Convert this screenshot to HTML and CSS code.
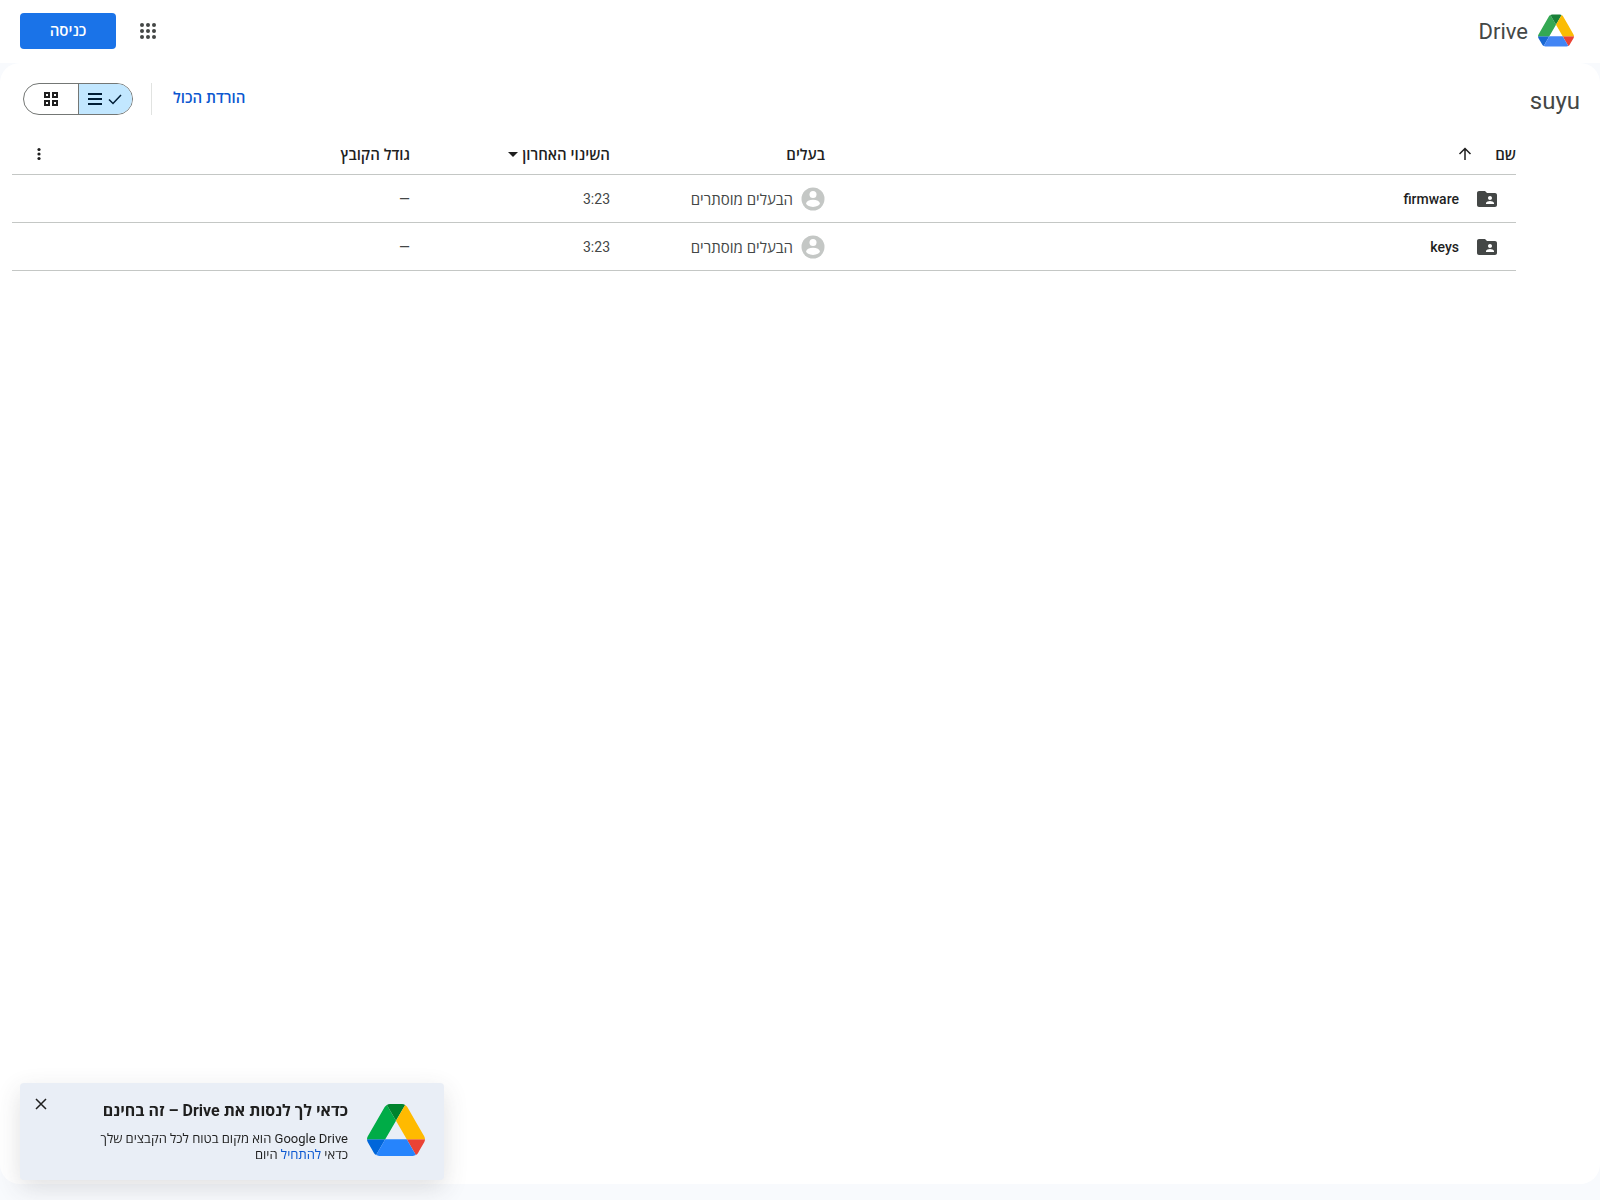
FILE: index.html
```html
<!DOCTYPE html>
<html lang="he" dir="rtl">
<head>
<meta charset="utf-8">
<title>suyu – Drive</title>
<meta name="viewport" content="width=device-width, initial-scale=1">
<link rel="stylesheet" href="styles.css">
</head>
<body>
<header class="topbar">
  <a class="brand" href="#">
    <svg class="brand-logo" viewBox="0 0 87.3 78" aria-hidden="true">
      <path fill="#1967d2" d="M6.6 66.85l3.85 6.65c.8 1.4 1.95 2.5 3.3 3.3l13.75-23.8H0c0 1.55.4 3.1 1.2 4.5z"/>
      <path fill="#34a853" d="M43.65 25L29.9 1.2c-1.35.8-2.5 1.9-3.3 3.3l-25.4 44A9.06 9.06 0 000 53h27.5z"/>
      <path fill="#ea4335" d="M73.55 76.8c1.35-.8 2.5-1.9 3.3-3.3l1.6-2.75L86.1 57.5c.8-1.4 1.2-2.95 1.2-4.5H59.8z"/>
      <path fill="#188038" d="M43.65 25L57.4 1.2C56.05.4 54.5 0 52.9 0H34.4c-1.6 0-3.15.45-4.5 1.2z"/>
      <path fill="#4285f4" d="M59.8 53H27.5L13.75 76.8c1.35.8 2.9 1.2 4.5 1.2h50.8c1.6 0 3.15-.45 4.5-1.2z"/>
      <path fill="#fbbc04" d="M73.4 26.5l-12.7-22c-.8-1.4-1.95-2.5-3.3-3.3L43.65 25 59.8 53h27.45c0-1.55-.4-3.1-1.2-4.5z"/>
    </svg>
    <span class="brand-name">Drive</span>
  </a>
  <div class="account">
    <button class="icon-button" type="button" aria-label="Google apps">
      <svg width="24" height="24" viewBox="0 0 24 24" fill="#444746"><circle cx="6" cy="6" r="2"/><circle cx="12" cy="6" r="2"/><circle cx="18" cy="6" r="2"/><circle cx="6" cy="12" r="2"/><circle cx="12" cy="12" r="2"/><circle cx="18" cy="12" r="2"/><circle cx="6" cy="18" r="2"/><circle cx="12" cy="18" r="2"/><circle cx="18" cy="18" r="2"/></svg>
    </button>
    <button class="sign-in" type="button">כניסה</button>
  </div>
</header>

<main class="panel">
  <div class="toolbar">
    <h1 class="folder-title">suyu</h1>
    <div class="actions">
      <button class="download" type="button">הורדת הכול</button>
      <div class="view-toggle">
        <button class="view selected" type="button" aria-label="List">
          <svg width="16" height="16" viewBox="0 0 16 16" fill="none" stroke="#001d35" stroke-width="1.5"><path d="M2 8.5l4 4 8-8.5"/></svg>
          <svg width="16" height="16" viewBox="0 0 16 16" fill="#001d35"><path d="M1 2h14v2H1zM1 7h14v2H1zM1 12h14v2H1z"/></svg>
        </button>
        <button class="view" type="button" aria-label="Grid">
          <svg width="16" height="16" viewBox="0 0 16 16" fill="none" stroke="#1f1f1f" stroke-width="2"><path d="M2 2h4v4H2zM10 2h4v4h-4zM2 10h4v4H2zM10 10h4v4h-4z"/></svg>
        </button>
      </div>
    </div>
  </div>

  <table class="files">
    <colgroup><col><col class="col-owner"><col class="col-date"><col class="col-size"></colgroup>
    <thead>
      <tr>
        <th><div class="head name-head"><span>שם</span>
          <svg width="20" height="20" viewBox="0 0 20 20" fill="none" stroke="#1f1f1f" stroke-width="1.5"><path d="M10 16V5M4.5 10L10 4.5l5.5 5.5"/></svg></div></th>
        <th>בעלים</th>
        <th><div class="head date-head"><span>השינוי האחרון</span>
          <svg width="10" height="5" viewBox="0 0 10 5" fill="#1f1f1f"><path d="M0 0h10L5 5z"/></svg></div></th>
        <th><div class="head size-head"><span>גודל הקובץ</span>
          <button class="icon-button more" type="button" aria-label="More"><svg width="20" height="20" viewBox="0 0 20 20" fill="#1f1f1f"><circle cx="10" cy="5.5" r="1.6"/><circle cx="10" cy="10" r="1.6"/><circle cx="10" cy="14.5" r="1.6"/></svg></button></div></th>
      </tr>
    </thead>
    <tbody>
      <tr>
        <td><div class="name"><svg width="24" height="24" viewBox="0 0 24 24" fill="#444746"><path fill-rule="evenodd" d="M20 6h-8l-2-2H4c-1.1 0-1.99.9-1.99 2L2 18c0 1.1.9 2 2 2h16c1.1 0 2-.9 2-2V8c0-1.1-.9-2-2-2zm-5 3c1.1 0 2 .9 2 2s-.9 2-2 2-2-.9-2-2 .9-2 2-2zm4 8h-8v-1c0-1.33 2.67-2 4-2s4 .67 4 2v1z"/></svg><span>firmware</span></div></td>
        <td><div class="owner"><svg width="24" height="24" viewBox="0 0 24 24" fill="#c4c7c5"><circle cx="12" cy="12" r="11.5"/><circle cx="12" cy="7.5" r="3.5" fill="#fff"/><ellipse cx="12" cy="16.3" rx="6.8" ry="3.6" fill="#fff"/></svg><span>הבעלים מוסתרים</span></div></td>
        <td>3:23</td>
        <td>—</td>
      </tr>
      <tr>
        <td><div class="name"><svg width="24" height="24" viewBox="0 0 24 24" fill="#444746"><path fill-rule="evenodd" d="M20 6h-8l-2-2H4c-1.1 0-1.99.9-1.99 2L2 18c0 1.1.9 2 2 2h16c1.1 0 2-.9 2-2V8c0-1.1-.9-2-2-2zm-5 3c1.1 0 2 .9 2 2s-.9 2-2 2-2-.9-2-2 .9-2 2-2zm4 8h-8v-1c0-1.33 2.67-2 4-2s4 .67 4 2v1z"/></svg><span>keys</span></div></td>
        <td><div class="owner"><svg width="24" height="24" viewBox="0 0 24 24" fill="#c4c7c5"><circle cx="12" cy="12" r="11.5"/><circle cx="12" cy="7.5" r="3.5" fill="#fff"/><ellipse cx="12" cy="16.3" rx="6.8" ry="3.6" fill="#fff"/></svg><span>הבעלים מוסתרים</span></div></td>
        <td>3:23</td>
        <td>—</td>
      </tr>
    </tbody>
  </table>
</main>

<aside class="promo">
  <svg class="promo-logo" viewBox="0 0 87.3 78" aria-hidden="true">
    <path fill="#0066da" d="M6.6 66.85l3.85 6.65c.8 1.4 1.95 2.5 3.3 3.3l13.75-23.8H0c0 1.55.4 3.1 1.2 4.5z"/>
    <path fill="#00ac47" d="M43.65 25L29.9 1.2c-1.35.8-2.5 1.9-3.3 3.3l-25.4 44A9.06 9.06 0 000 53h27.5z"/>
    <path fill="#ea4335" d="M73.55 76.8c1.35-.8 2.5-1.9 3.3-3.3l1.6-2.75L86.1 57.5c.8-1.4 1.2-2.95 1.2-4.5H59.8z"/>
    <path fill="#00832d" d="M43.65 25L57.4 1.2C56.05.4 54.5 0 52.9 0H34.4c-1.6 0-3.15.45-4.5 1.2z"/>
    <path fill="#2684fc" d="M59.8 53H27.5L13.75 76.8c1.35.8 2.9 1.2 4.5 1.2h50.8c1.6 0 3.15-.45 4.5-1.2z"/>
    <path fill="#ffba00" d="M73.4 26.5l-12.7-22c-.8-1.4-1.95-2.5-3.3-3.3L43.65 25 59.8 53h27.45c0-1.55-.4-3.1-1.2-4.5z"/>
  </svg>
  <div class="promo-text">
    <h2>כדאי לך לנסות את Drive – זה בחינם</h2>
    <p>Google Drive הוא מקום בטוח לכל הקבצים שלך<br>כדאי <a href="#">להתחיל</a> היום</p>
  </div>
  <button class="icon-button promo-close" type="button" aria-label="Close">
    <svg width="16" height="16" viewBox="0 0 16 16" fill="none" stroke="#1f1f1f" stroke-width="1.5"><path d="M3 3l10 10M13 3L3 13"/></svg>
  </button>
</aside>
</body>
</html>
```
FILE: styles.css
```css
* {
  box-sizing: border-box;
}

body {
  margin: 0;
  min-height: 100vh;
  display: flex;
  flex-direction: column;
  background: #f8fafd;
  color: #1f1f1f;
  font: 400 14px/20px Roboto, "Open Sans", sans-serif;
}

button {
  margin: 0;
  padding: 0;
  border: 0;
  background: none;
  color: inherit;
  font: inherit;
  cursor: pointer;
}

svg {
  display: block;
  flex: none;
}

.icon-button {
  display: flex;
  align-items: center;
  justify-content: center;
}

.topbar {
  height: 63px;
  padding: 0 26px 2px 20px;
  display: flex;
  align-items: center;
  justify-content: space-between;
  background: #fff;
}

.brand {
  display: flex;
  align-items: center;
  gap: 10px;
  color: #444746;
  font-size: 22px;
  line-height: 32px;
  text-decoration: none;
}

.brand-logo {
  width: 36px;
  height: 33px;
}

.brand-name {
  padding-top: 2px;
}

.account {
  display: flex;
  align-items: center;
  gap: 12px;
}

.account .icon-button {
  width: 40px;
  height: 40px;
}

.sign-in {
  width: 96px;
  height: 36px;
  padding-bottom: 2px;
  border-radius: 4px;
  background: #1a73e8;
  color: #fff;
  font: 600 15px/20px "Open Sans", sans-serif;
}

.panel {
  flex: 1;
  margin-bottom: 16px;
  border-radius: 20px;
  background: #fff;
}

.toolbar {
  height: 71px;
  padding: 0 20px 0 23px;
  display: flex;
  align-items: center;
  justify-content: space-between;
}

.folder-title {
  margin: 0;
  padding-top: 4px;
  color: #444746;
  font-size: 24px;
  font-weight: 400;
  line-height: 32px;
}

.actions {
  display: flex;
  align-items: center;
  gap: 18px;
}

.download {
  height: 32px;
  padding: 0 0 4px 21px;
  border-left: 1px solid #e1e3e1;
  color: #0b57d0;
  font: 600 15px/20px "Open Sans", sans-serif;
}

.view-toggle {
  width: 110px;
  height: 32px;
  display: flex;
  border: 1px solid #747775;
  border-radius: 16px;
  overflow: hidden;
}

.view {
  flex: 1;
  display: flex;
  align-items: center;
  justify-content: center;
  gap: 4px;
}

.view.selected {
  border-left: 1px solid #747775;
  background: #c2e7ff;
}

.files {
  width: calc(100% - 96px);
  margin: 0 84px 0 12px;
  table-layout: fixed;
  border-collapse: collapse;
}

.col-owner {
  width: 215px;
}

.col-date {
  width: 200px;
}

.col-size {
  width: 398px;
}

.files th,
.files td {
  padding: 0;
  border-bottom: 1px solid #c4c7c5;
  text-align: right;
}

.files th {
  height: 40px;
  padding-top: 1px;
  font: 600 15px/20px "Open Sans", sans-serif;
}

.files td {
  height: 48px;
  padding-top: 1px;
  color: #444746;
}

.head {
  display: flex;
  align-items: center;
}

.name-head {
  gap: 20px;
}

.date-head {
  gap: 4px;
}

.size-head {
  justify-content: space-between;
}

.more {
  width: 20px;
  height: 20px;
  margin-left: 17px;
}

.name {
  display: flex;
  align-items: center;
  gap: 16px;
  padding-right: 17px;
  color: #1f1f1f;
  font-weight: 500;
}

.owner {
  display: flex;
  align-items: center;
  gap: 8px;
  font: 400 15px/20px "Open Sans", sans-serif;
}

.promo {
  position: fixed;
  left: 20px;
  bottom: 20px;
  width: 424px;
  min-height: 97px;
  padding: 17px 19px 12px 16px;
  display: flex;
  gap: 19px;
  border-radius: 4px;
  background: #e9eef6;
  box-shadow: 0 8px 24px rgba(60, 64, 67, 0.16);
}

.promo-logo {
  width: 58px;
  height: 52px;
  margin-top: 4px;
}

.promo-text {
  flex: 1;
}

.promo h2 {
  margin: 0 0 10px;
  padding-top: 1px;
  font-size: 16px;
  font-weight: 700;
  line-height: 20px;
}

.promo p {
  margin: 0;
  font-size: 13px;
  line-height: 16px;
}

.promo a {
  color: #0b57d0;
  text-decoration: none;
}

.promo-close {
  position: absolute;
  left: 13px;
  top: 13px;
}
```
